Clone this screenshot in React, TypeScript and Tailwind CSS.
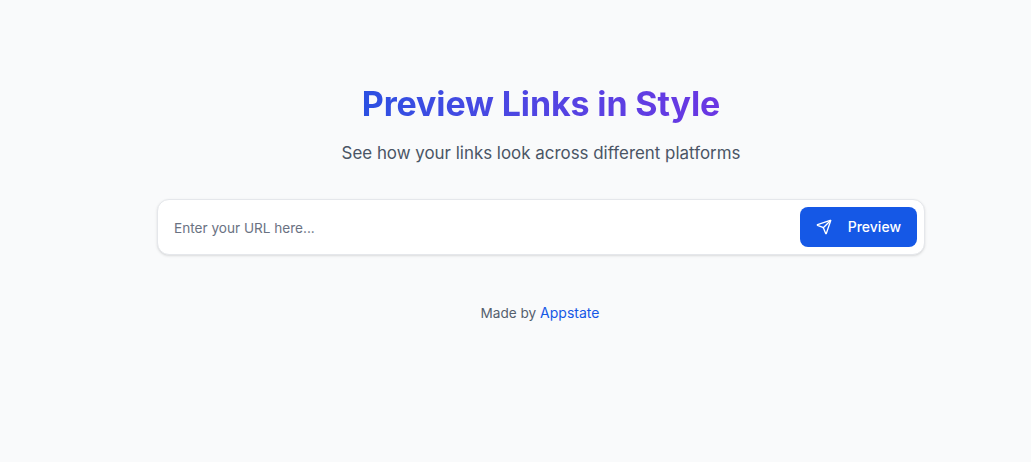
import { Send } from "lucide-react";

const App = () => {
  return (
    <div className="h-[462px] overflow-hidden bg-[#f9fafb] pl-[51px] pt-[84px] font-['Inter',sans-serif]">
      <div className="mx-auto flex w-[768px] flex-col items-center">
        <h1 className="bg-gradient-to-r from-[#2b50e2] to-[#6a36e3] bg-clip-text text-[34px] leading-10 font-bold tracking-[-0.14px] text-transparent">
          Preview Links in Style
        </h1>
        <p className="mt-[15px] text-[16.92px] leading-7 text-gray-600">See how your links look across different platforms</p>

        <div className="mt-8 flex h-14 w-full items-center rounded-xl border border-gray-200 bg-white pl-4 pr-[7px] shadow-sm">
          <input
            type="text"
            placeholder="Enter your URL here..."
            className="mt-0.5 min-w-0 flex-1 bg-transparent text-[13.6px] text-gray-900 outline-none placeholder:text-gray-500"
          />
          <button className="flex h-10 items-center gap-4 rounded-lg bg-[#1558e6] px-4 text-sm font-medium text-white">
            <Send className="h-4 w-4" />
            Preview
          </button>
        </div>

        <p className="mt-12 -ml-0.5 text-[13.6px] leading-5 text-[#555f6e]">
          Made by <a className="text-sm text-[#1558e6]">Appstate</a>
        </p>
      </div>
    </div>
  );
};

export default App;
